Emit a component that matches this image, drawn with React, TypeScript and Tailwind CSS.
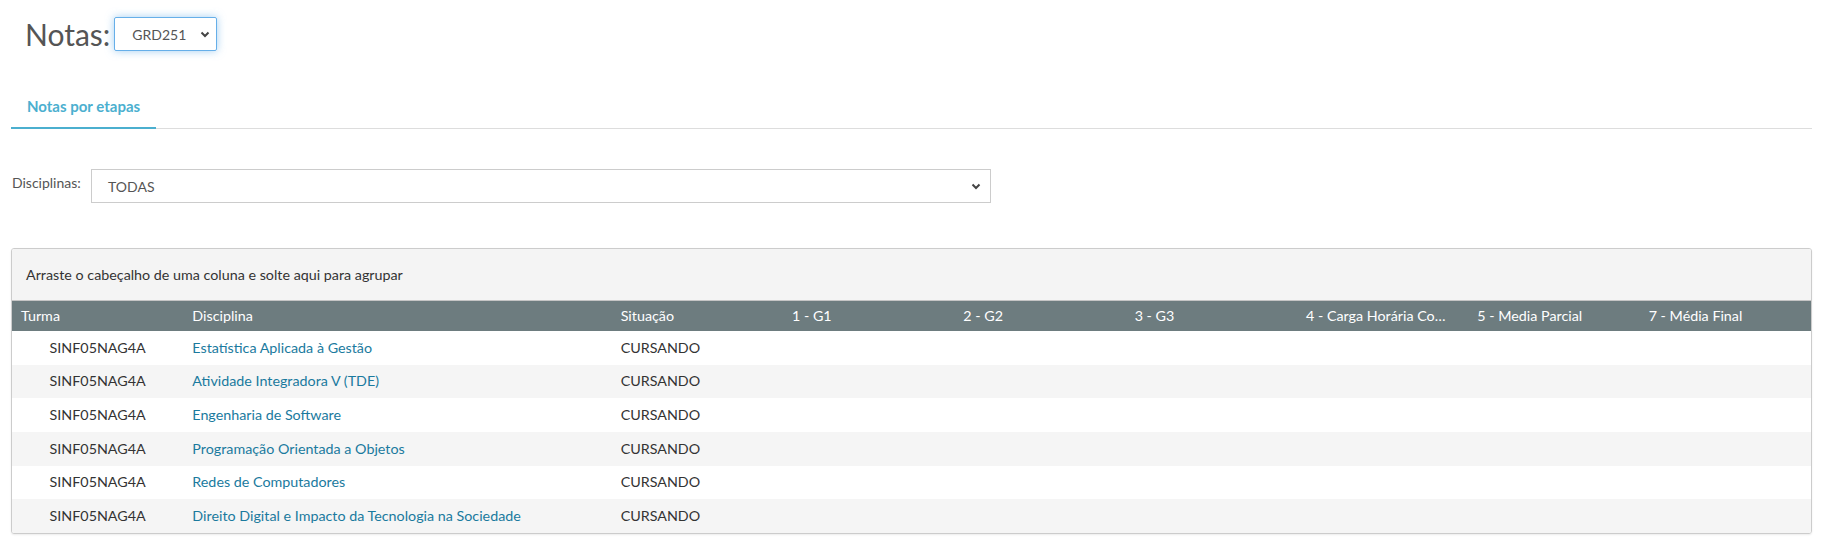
import React from "react";

const rows = [
  "Estatística Aplicada à Gestão",
  "Atividade Integradora V (TDE)",
  "Engenharia de Software",
  "Programação Orientada a Objetos",
  "Redes de Computadores",
  "Direito Digital e Impacto da Tecnologia na Sociedade",
];

const columns = [
  "Turma",
  "Disciplina",
  "Situação",
  "1 - G1",
  "2 - G2",
  "3 - G3",
  "4 - Carga Horária Complementar",
  "5 - Media Parcial",
  "7 - Média Final",
];

function Chevron() {
  return (
    <svg width="10" height="7" viewBox="0 0 10 7" className="shrink-0">
      <polyline points="1.5,1.5 5,5 8.5,1.5" fill="none" stroke="#444" strokeWidth="2" />
    </svg>
  );
}

export default function App() {
  return (
    <div className="min-h-[554px] bg-white pl-[11px] pr-[21px] text-[14.3px] text-[#333]" style={{ fontFamily: "Lato, 'Open Sans', sans-serif" }}>
      {/* title */}
      <div className="mt-[17px] flex h-[34px] items-center pl-[14px]">
        <span className="text-[30px] leading-none text-[#555]">Notas:</span>
        <div className="ml-[4px] flex h-[34px] w-[103px] items-center justify-between rounded-[2px] border border-[#66afe9] pl-[17px] pr-[6px] text-[14px] text-[#555] shadow-[0_0_8px_rgba(102,175,233,0.6)]">
          <span>GRD251</span>
          <Chevron />
        </div>
      </div>

      {/* tabs */}
      <div className="mt-[34px] flex border-b border-[#ddd]">
        <div className="-mb-px border-b-2 border-[#4bafcf] px-4 py-3 text-[15px] leading-[18px] font-bold text-[#4bafcf]">
          Notas por etapas
        </div>
      </div>

      {/* filter */}
      <div className="mt-[40px] flex items-start text-[14px]">
        <label className="w-[80px] pl-px pt-[4px] leading-[20px] text-[#555]">Disciplinas:</label>
        <div className="flex h-[34px] w-[900px] items-center justify-between border border-[#ccc] pl-[16px] pr-[9px] text-[#555]">
          <span>TODAS</span>
          <Chevron />
        </div>
      </div>

      {/* grid */}
      <div className="mt-[45px] overflow-hidden rounded-[3px] border border-[#ccc] shadow-[0_1px_2px_rgba(0,0,0,0.08)]">
        <div className="flex h-[52px] items-center border-b border-[#c5c5c5] bg-[#f4f4f4] pl-[14px]">
          Arraste o cabeçalho de uma coluna e solte aqui para agrupar
        </div>
        <div className="grid h-[30px] grid-cols-[1fr_2.5fr_1fr_1fr_1fr_1fr_1fr_1fr_1fr] items-center bg-[#6d7c7f] text-white">
          {columns.map((c) => (
            <div key={c} className="truncate pl-[9px] pr-[12px]">
              {c}
            </div>
          ))}
        </div>
        {rows.map((d, i) => (
          <div
            key={d}
            className={`grid h-[33.67px] grid-cols-[1fr_2.5fr_1fr_1fr_1fr_1fr_1fr_1fr_1fr] items-center pb-px ${
              i % 2 === 1 ? "bg-[#f5f5f5]" : "bg-white"
            }`}
          >
            <div className="text-center">SINF05NAG4A</div>
            <div className="truncate pl-[9px] text-[#1a7a9e]">{d}</div>
            <div className="pl-[9px]">CURSANDO</div>
            <div />
            <div />
            <div />
            <div />
            <div />
            <div />
          </div>
        ))}
      </div>
    </div>
  );
}
